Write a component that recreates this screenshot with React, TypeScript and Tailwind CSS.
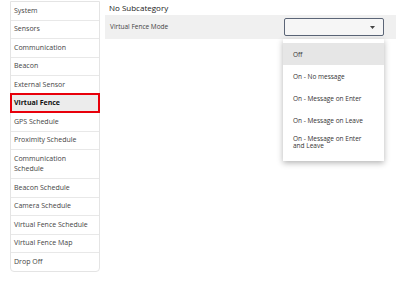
import { useState } from 'react'

const CATEGORIES = [
  'System',
  'Sensors',
  'Communication',
  'Beacon',
  'External Sensor',
  'Virtual Fence',
  'GPS Schedule',
  'Proximity Schedule',
  'Communication Schedule',
  'Beacon Schedule',
  'Camera Schedule',
  'Virtual Fence Schedule',
  'Virtual Fence Map',
  'Drop Off',
]

const MODES = [
  'Off',
  'On - No message',
  'On - Message on Enter',
  'On - Message on Leave',
  'On - Message on Enter and Leave',
]

export default function App() {
  const [active, setActive] = useState('Virtual Fence')
  const [hovered] = useState('Off')

  return (
    <div
      className="w-[400px] h-[284px] bg-white overflow-hidden flex gap-[5px] pl-[10px] text-[#333]"
      style={{ fontFamily: '"Open Sans", "Noto Sans", Arial, sans-serif' }}
    >
      {/* Category list */}
      <div className="w-[90px] shrink-0 self-start mt-[1px] border border-[#e4e4e4] rounded-b-[4px] bg-white">
        {CATEGORIES.map((cat, i) => (
          <button
            key={cat}
            type="button"
            onClick={() => setActive(cat)}
            className={`block w-full text-left px-[3px] py-[3.5px] text-[7px] leading-[10.5px] ${
              i > 0 ? 'border-t border-[#e8e8e8]' : ''
            } ${
              active === cat
                ? 'bg-[#ececec] font-bold text-[#111] outline-2 outline-[#e8000b] -outline-offset-1'
                : 'text-[#444]'
            }`}
          >
            {cat}
          </button>
        ))}
      </div>

      {/* Settings panel */}
      <div className="w-[291px] shrink-0 self-start">
        <div className="h-[15px] px-[4px] flex items-center text-[8px] text-[#222] bg-white">No Subcategory</div>
        <div className="relative h-[24px] bg-[#f0f0f0] flex items-center justify-between pl-[5px] pr-[12px]">
          <span className="text-[6.5px] text-[#444]">Virtual Fence Mode</span>
          <div className="w-[100px] h-[18px] rounded-[2px] border border-[#5b6577] bg-[#f6f6f6] flex items-center justify-end pr-[8px]">
            <svg width="5" height="3" viewBox="0 0 5 3">
              <path d="M0 0h5L2.5 3z" fill="#444" />
            </svg>
          </div>

          {/* Open dropdown */}
          <div className="absolute left-[178px] top-[24px] w-[101px] bg-white shadow-[0_2px_6px_rgba(0,0,0,0.3)] pt-[4px] pb-[8px] z-10">
            {MODES.map((m) => (
              <div
                key={m}
                className={`px-[10px] h-[22px] flex items-center text-[6.5px] leading-[7px] text-[#333] ${
                  hovered === m ? 'bg-[#e6e6e6]' : ''
                }`}
              >
                {m}
              </div>
            ))}
          </div>
        </div>
      </div>
    </div>
  )
}
